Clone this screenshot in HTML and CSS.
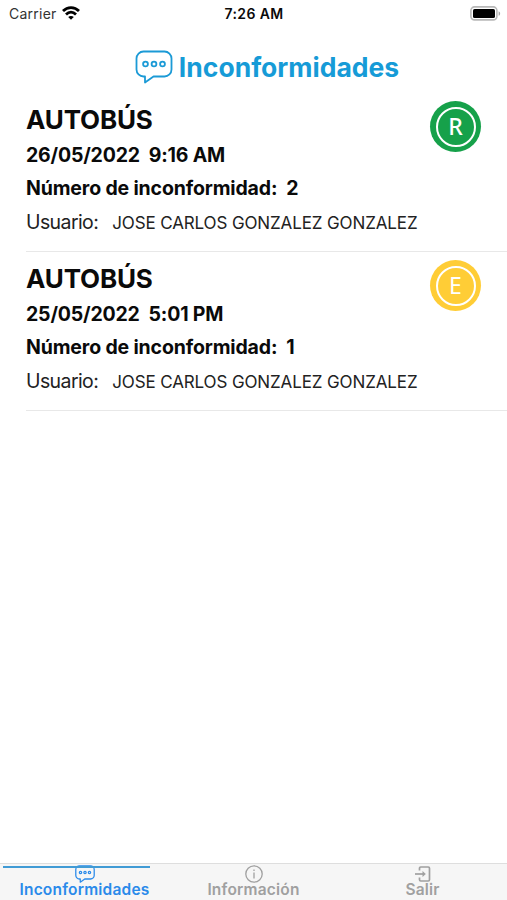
FILE: index.html
```html
<!DOCTYPE html>
<html lang="es">
<head>
    <meta charset="UTF-8">
    <meta name="viewport" content="width=device-width, initial-scale=1.0">
    <title>Inconformidades</title>
    <link rel="stylesheet" href="styles.css">
</head>
<body>
    <div class="status-bar">
        <div class="carrier">
            <span>Carrier</span>
            <svg width="18" height="14" viewBox="0 0 18 14" fill="none" stroke="#000" stroke-width="2.8">
                <path d="M1 5C5.600 .4 12.400 .4 17 5"/>
                <path d="M4 8.400c3-2.900 7-2.900 10 0"/>
                <path d="M9 13.800L6.200 11c1.600-1.500 4-1.500 5.600 0z" fill="#000" stroke="none"/>
            </svg>
        </div>
        <div class="clock">7:26 AM</div>
        <div class="battery">
            <svg width="31" height="15" viewBox="0 0 31 15">
                <rect x=".9" y=".9" width="26" height="13" rx="3.6" fill="#fff" stroke="#b8b8b8" stroke-width="1.6"/>
                <rect x="3" y="3" width="22" height="9" rx="1.6"/>
                <path d="M28.600 5.200c2 .8 2 3.800 0 4.600z" fill="#a5a5a5"/>
            </svg>
        </div>
    </div>

    <header class="header">
        <svg width="38" height="34" viewBox="0 0 38 34" fill="none" stroke="#1b9ad6" stroke-width="1.8">
            <path d="M8.500 1.500h21a7 7 0 0 1 7 7v11a7 7 0 0 1-7 7H18.500L10 32.500v-6H8.500a7 7 0 0 1-7-7v-11a7 7 0 0 1 7-7z" stroke-linejoin="round"/>
            <circle cx="10.500" cy="14" r="2.400"/>
            <circle cx="19" cy="14" r="2.400"/>
            <circle cx="27.500" cy="14" r="2.400"/>
        </svg>
        <h1>Inconformidades</h1>
    </header>

    <main class="list">
        <article class="item">
            <div class="item-info">
                <h2>AUTOBÚS</h2>
                <p class="date">26/05/2022&nbsp; 9:16 AM</p>
                <p class="number">Número de inconformidad:&nbsp; 2</p>
                <p class="user"><span class="user-label">Usuario:</span><span class="user-name">JOSE CARLOS GONZALEZ GONZALEZ</span></p>
            </div>
            <div class="badge badge-green"><span>R</span></div>
        </article>
        <article class="item">
            <div class="item-info">
                <h2>AUTOBÚS</h2>
                <p class="date">25/05/2022&nbsp; 5:01 PM</p>
                <p class="number">Número de inconformidad:&nbsp; 1</p>
                <p class="user"><span class="user-label">Usuario:</span><span class="user-name">JOSE CARLOS GONZALEZ GONZALEZ</span></p>
            </div>
            <div class="badge badge-yellow"><span>E</span></div>
        </article>
    </main>

    <nav class="tabs">
        <div class="tab active">
            <svg width="20" height="18" viewBox="0 0 38 34" fill="none" stroke="currentColor" stroke-width="2.4">
                <path d="M8.500 1.500h21a7 7 0 0 1 7 7v11a7 7 0 0 1-7 7H18.500L10 32.500v-6H8.500a7 7 0 0 1-7-7v-11a7 7 0 0 1 7-7z" stroke-linejoin="round"/>
                <circle cx="10.500" cy="14" r="2.200"/>
                <circle cx="19" cy="14" r="2.200"/>
                <circle cx="27.500" cy="14" r="2.200"/>
            </svg>
            <span>Inconformidades</span>
        </div>
        <div class="tab">
            <svg width="20" height="18" viewBox="0 0 20 18" fill="none" stroke="currentColor" stroke-width="1.300">
                <circle cx="10" cy="9" r="8.200"/>
                <path d="M10 7.500v6M10 4.500v1.600"/>
            </svg>
            <span>Información</span>
        </div>
        <div class="tab">
            <svg width="20" height="18" viewBox="0 0 20 18" fill="none" stroke="currentColor" stroke-width="1.700">
                <path d="M6.500 5.500V3.300Q6.500 2 7.800 2h7.400q1.300 0 1.300 1.300v11.400q0 1.300-1.300 1.300H7.800q-1.300 0-1.300-1.300v-2.200"/>
                <path d="M2 9h8"/>
                <path d="M9.500 6l3.300 3-3.300 3z" fill="currentColor" stroke="none"/>
            </svg>
            <span>Salir</span>
        </div>
    </nav>
</body>
</html>
```

FILE: styles.css
```css
* {
    margin: 0;
    padding: 0;
    box-sizing: border-box;
}

body {
    font-family: Inter, 'Liberation Sans', sans-serif;
    background: #fff;
    color: #0a0a0a;
    height: 100vh;
    display: flex;
    flex-direction: column;
    overflow: hidden;
}

svg {
    display: block;
    flex-shrink: 0;
}

.status-bar {
    display: grid;
    grid-template-columns: 1fr auto 1fr;
    align-items: center;
    height: 26px;
    padding: 0 6px 0 9px;
    font-size: 14px;
    line-height: 17px;
}

.carrier {
    display: flex;
    align-items: center;
    gap: 5px;
    color: #333;
    letter-spacing: 0.25px;
}

.clock {
    font-weight: 600;
    letter-spacing: 0.4px;
    margin-right: 2px;
}

.battery {
    justify-self: end;
}

.header {
    display: flex;
    justify-content: center;
    align-items: center;
    gap: 6px;
    height: 67px;
    padding: 15px 0 0 27px;
}

h1 {
    font-size: 26.5px;
    line-height: 32px;
    font-weight: 700;
    color: #169bd7;
    margin-top: -1px;
}

.list {
    flex: 1;
}

.item {
    display: flex;
    justify-content: space-between;
    height: 159px;
    margin-left: 26px;
    padding: 8px 26px 0 0;
    border-bottom: 1px solid #e8e8e8;
}

h2 {
    font-size: 26px;
    line-height: 38px;
    font-weight: 700;
    letter-spacing: -0.15px;
}

.date,
.number {
    font-size: 19.5px;
    line-height: 33px;
    font-weight: 700;
    letter-spacing: -0.18px;
}

.number {
    letter-spacing: -0.15px;
}

.user {
    display: flex;
    align-items: baseline;
    gap: 14px;
    line-height: 34px;
    color: #222;
}

.user-label {
    font-size: 19.5px;
    letter-spacing: -0.6px;
}

.user-name {
    font-size: 17px;
    letter-spacing: -0.12px;
}

.badge {
    display: flex;
    align-items: center;
    justify-content: center;
    width: 51px;
    height: 51px;
    border-radius: 50%;
}

.badge span {
    width: 40px;
    height: 40px;
    border: 2px solid #fff;
    border-radius: 50%;
    color: #fff;
    font-family: 'Noto Sans', sans-serif;
    font-size: 23px;
    line-height: 35px;
    text-align: center;
}

.badge-green {
    background: #16a14a;
}

.badge-green span {
    font-weight: 500;
}

.badge-yellow {
    background: #ffcd36;
}

.tabs {
    display: grid;
    grid-template-columns: repeat(3, 1fr);
    height: 37px;
    border-top: 1px solid #dedede;
    background: #f6f6f6;
}

.tab {
    position: relative;
    display: flex;
    flex-direction: column;
    align-items: center;
    padding-top: 1px;
    color: #a0a0a0;
    font-size: 15.5px;
    line-height: 14px;
    font-weight: 600;
    letter-spacing: 0.2px;
}

.tab.active {
    color: #2a8aea;
}

/* selected tab indicator */
.tab.active::before {
    content: '';
    position: absolute;
    top: 2px;
    left: 3px;
    width: 147px;
    height: 2px;
    background: #419bd5;
}
```
